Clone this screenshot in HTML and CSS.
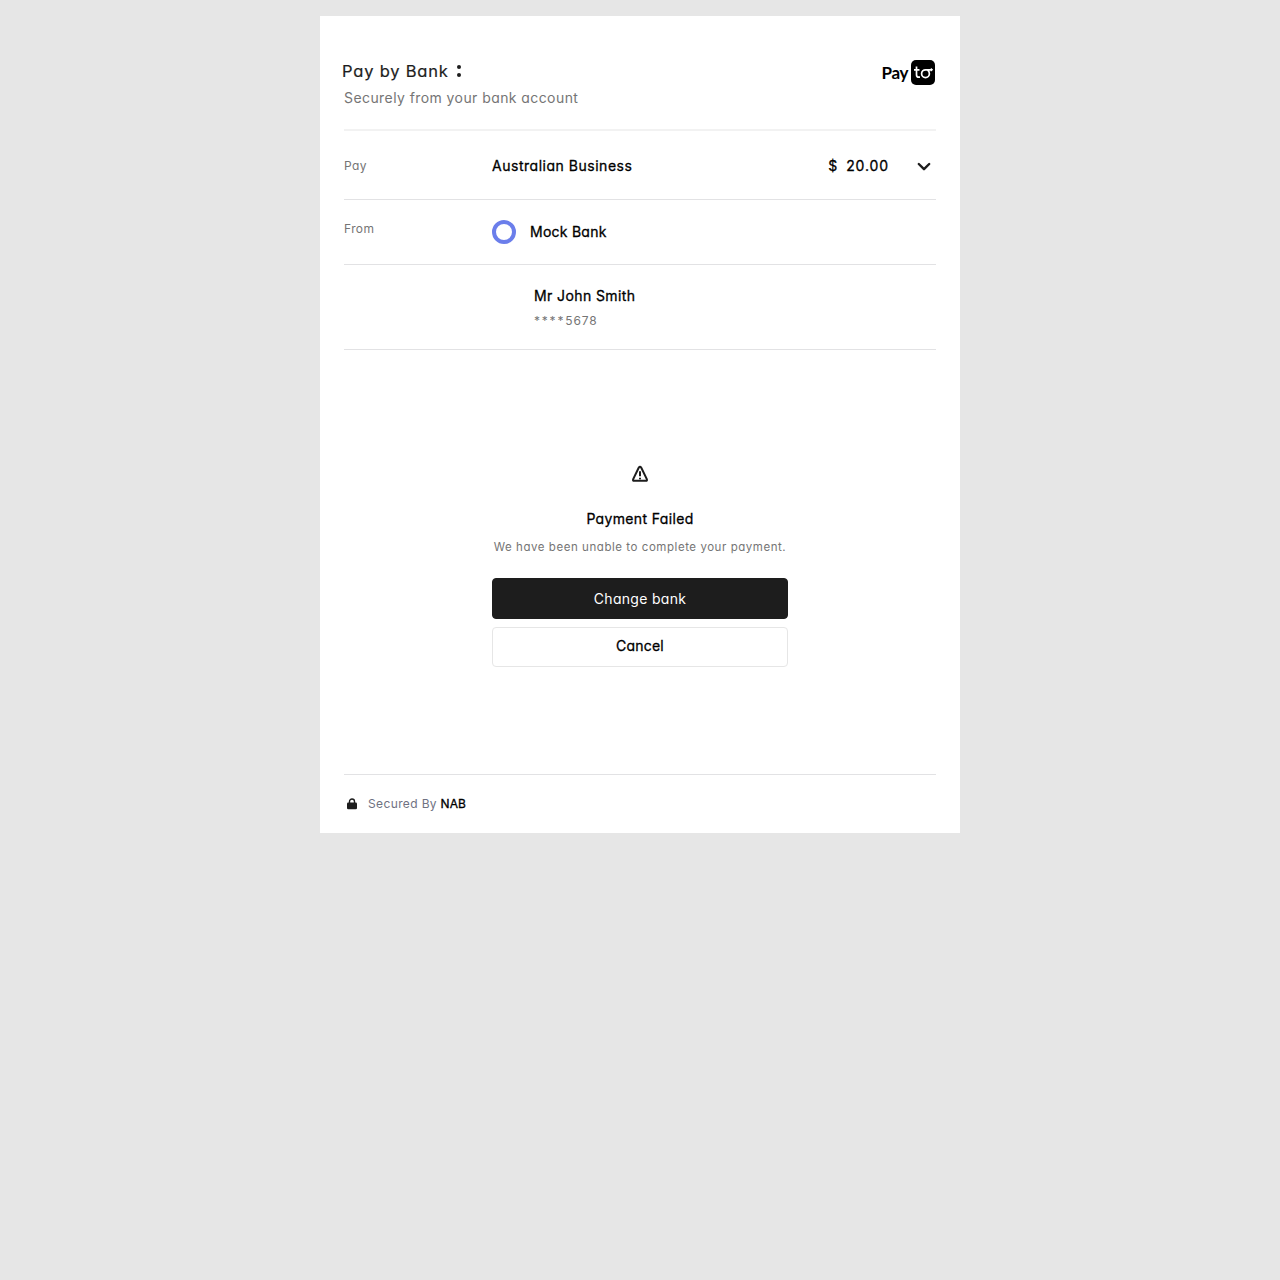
FILE: index.html
```html
<!DOCTYPE html>
<html lang="en">
<head>
<meta charset="utf-8">
<title>Pay by Bank</title>
<link rel="stylesheet" href="styles.css">
</head>
<body>
<main class="card">
  <header class="header">
    <div>
      <h1 class="title">Pay by Bank<svg class="colon" width="4" height="12" viewBox="0 0 4 12"><circle cx="2" cy="2" r="2"/><circle cx="2" cy="10" r="2"/></svg></h1>
      <p class="subtitle">Securely from your bank account</p>
    </div>
    <div class="payto">
      <span class="payto-word">Pay</span>
      <svg class="payto-mark" width="24" height="25" viewBox="0 0 24 25"><rect width="24" height="25" rx="5"/><path d="M5.500 6.500v8.200q0 2.500 2.300 2.500h1.200M3 9.800h5.500M21 9.800h-6.500a3.900 3.900 0 1 0 3.900 3.900q0-2.300-1.800-3.700"/><path class="arrow" d="M19.800 7.800l2.400 2-2.400 2z"/></svg>
    </div>
  </header>
  <section class="row row-pay">
    <span class="label">Pay</span>
    <span class="value payee">Australian Business</span>
    <span class="value amount"><span>$</span><span>20.00</span></span>
    <svg class="chevron" width="14" height="9" viewBox="0 0 14 9"><path d="M1.800 2L7 7.200l5.200-5.200"/></svg>
  </section>
  <section class="row row-from">
    <span class="label">From</span>
    <span class="ring"></span>
    <span class="value bank">Mock Bank</span>
  </section>
  <section class="account">
    <p class="value holder">Mr John Smith</p>
    <p class="number"><span class="mask">****</span>5678</p>
  </section>
  <section class="result">
    <svg class="warning" width="18" height="18" viewBox="0 0 18 18"><path d="M7.700 2.700L2.200 14.100q-.7 1.700 1 1.700h11.600q1.700 0 1-1.700L10.300 2.700q-1.300-2-2.600 0zM9 6.200v5M9 12.700v1.600"/></svg>
    <h2 class="value failed">Payment Failed</h2>
    <p class="message">We have been unable to complete your payment.</p>
    <button class="button button-primary">Change bank</button>
    <button class="button button-secondary">Cancel</button>
  </section>
  <footer class="footer">
    <svg class="lock" width="10" height="12" viewBox="0 0 10 12"><path class="shackle" d="M2.500 6V3.500a2.500 2.500 0 0 1 5 0V6"/><rect y="4.600" width="10" height="6.600" rx="1.300"/></svg>
    <span class="secured">Secured By</span><span class="nab">NAB</span>
  </footer>
</main>
</body>
</html>
```
FILE: styles.css
```css
* { box-sizing: border-box; }
body {
  margin: 0;
  padding: 16px 0;
  min-height: 1280px;
  background: #e6e6e6;
  color: #000;
  font-family: Inter, "Liberation Sans", sans-serif;
  font-size: 14px;
  line-height: 20px;
  letter-spacing: .6px;
  font-feature-settings: "cv11" 1;
}
h1, h2, p { margin: 0; font-weight: 400; }
svg { display: block; flex: none; }
.card {
  width: 640px;
  height: 817px;
  margin: 0 auto;
  padding: 0 24px;
  background: #fff;
  display: flex;
  flex-direction: column;
}

.header {
  height: 115px;
  padding-top: 43px;
  border-bottom: 2px solid #f2f2f2;
  display: flex;
  justify-content: space-between;
  align-items: flex-start;
}
.title {
  display: flex;
  align-items: center;
  height: 24px;
  margin-left: -2px;
  font-size: 16.500px;
  line-height: 24px;
  letter-spacing: .8px;
  color: #1d1d1d;
  -webkit-text-stroke: .2px;
}
.colon { margin-left: 8px; fill: #1d1d1d; }
.subtitle { margin-top: 5px; letter-spacing: .42px; color: #757575; }
.payto { display: flex; align-items: center; margin: 1px 1px 0 0; gap: 3px; }
.payto-word { font: 700 17px/25px Lato, sans-serif; letter-spacing: -.400px; }
.payto-mark path { fill: none; stroke: #fff; stroke-width: 1.700; }
.payto-mark .arrow { fill: #fff; stroke: none; }

.row { display: flex; align-items: center; border-bottom: 1px solid #e2e2e4; }
.row-pay { height: 69px; padding-top: 2px; }
.row-from { height: 65px; }
.label { width: 148px; font-size: 12px; letter-spacing: .4px; color: #757575; }
.row-from .label { padding-bottom: 6px; }
.value { font-size: 14px; font-weight: 400; -webkit-text-stroke: .3px; }
.payee { flex: 1; letter-spacing: .52px; }
.amount { display: flex; gap: 8px; margin-right: 28px; letter-spacing: .9px; }
.chevron { margin-right: 5px; fill: none; stroke: #1d1d1d; stroke-width: 2.400; stroke-linecap: round; stroke-linejoin: round; }
.ring { width: 24px; height: 24px; border: 4px solid #6b7eeb; border-radius: 50%; margin-right: 14px; }
.bank { letter-spacing: .25px; }

.account { height: 85px; padding: 21px 0 0 190px; border-bottom: 1px solid #e2e2e4; }
.holder { letter-spacing: .4px; }
.number { margin-top: 5px; font-size: 12px; letter-spacing: .9px; color: #757575; }
.mask { letter-spacing: 1.800px; }

.result { flex: 1; display: flex; flex-direction: column; align-items: center; padding-top: 115px; }
.warning { fill: none; stroke: #1d1d1d; stroke-width: 2; }
.failed { margin-top: 26px; letter-spacing: .35px; }
.message { margin-top: 8px; font-size: 11.500px; letter-spacing: .55px; color: #757575; }
.button {
  width: 296px;
  height: 40px;
  padding: 0;
  border: 1px solid #1d1d1d;
  border-radius: 4px;
  font: inherit;
  letter-spacing: .3px;
  font-feature-settings: inherit;
}
.button-primary { height: 41px; padding-top: 1px; margin-top: 21px; background: #1d1d1d; color: #fff; }
.button-secondary {
  margin-top: 8px;
  padding-bottom: 2px;
  background: #fff;
  border-color: #e6e6e6;
  color: #000;
  letter-spacing: .2px;
  -webkit-text-stroke: .3px;
}

.footer { height: 59px; border-top: 1px solid #e2e2e4; display: flex; align-items: center; font-size: 12px; }
.lock { margin: 0 11px 0 3px; fill: #1d1d1d; }
.shackle { fill: none; stroke: #1d1d1d; stroke-width: 1.400; }
.secured { margin-right: 3.500px; letter-spacing: .37px; color: #6f7282; }
.nab { letter-spacing: .15px; -webkit-text-stroke: .3px; }
```
